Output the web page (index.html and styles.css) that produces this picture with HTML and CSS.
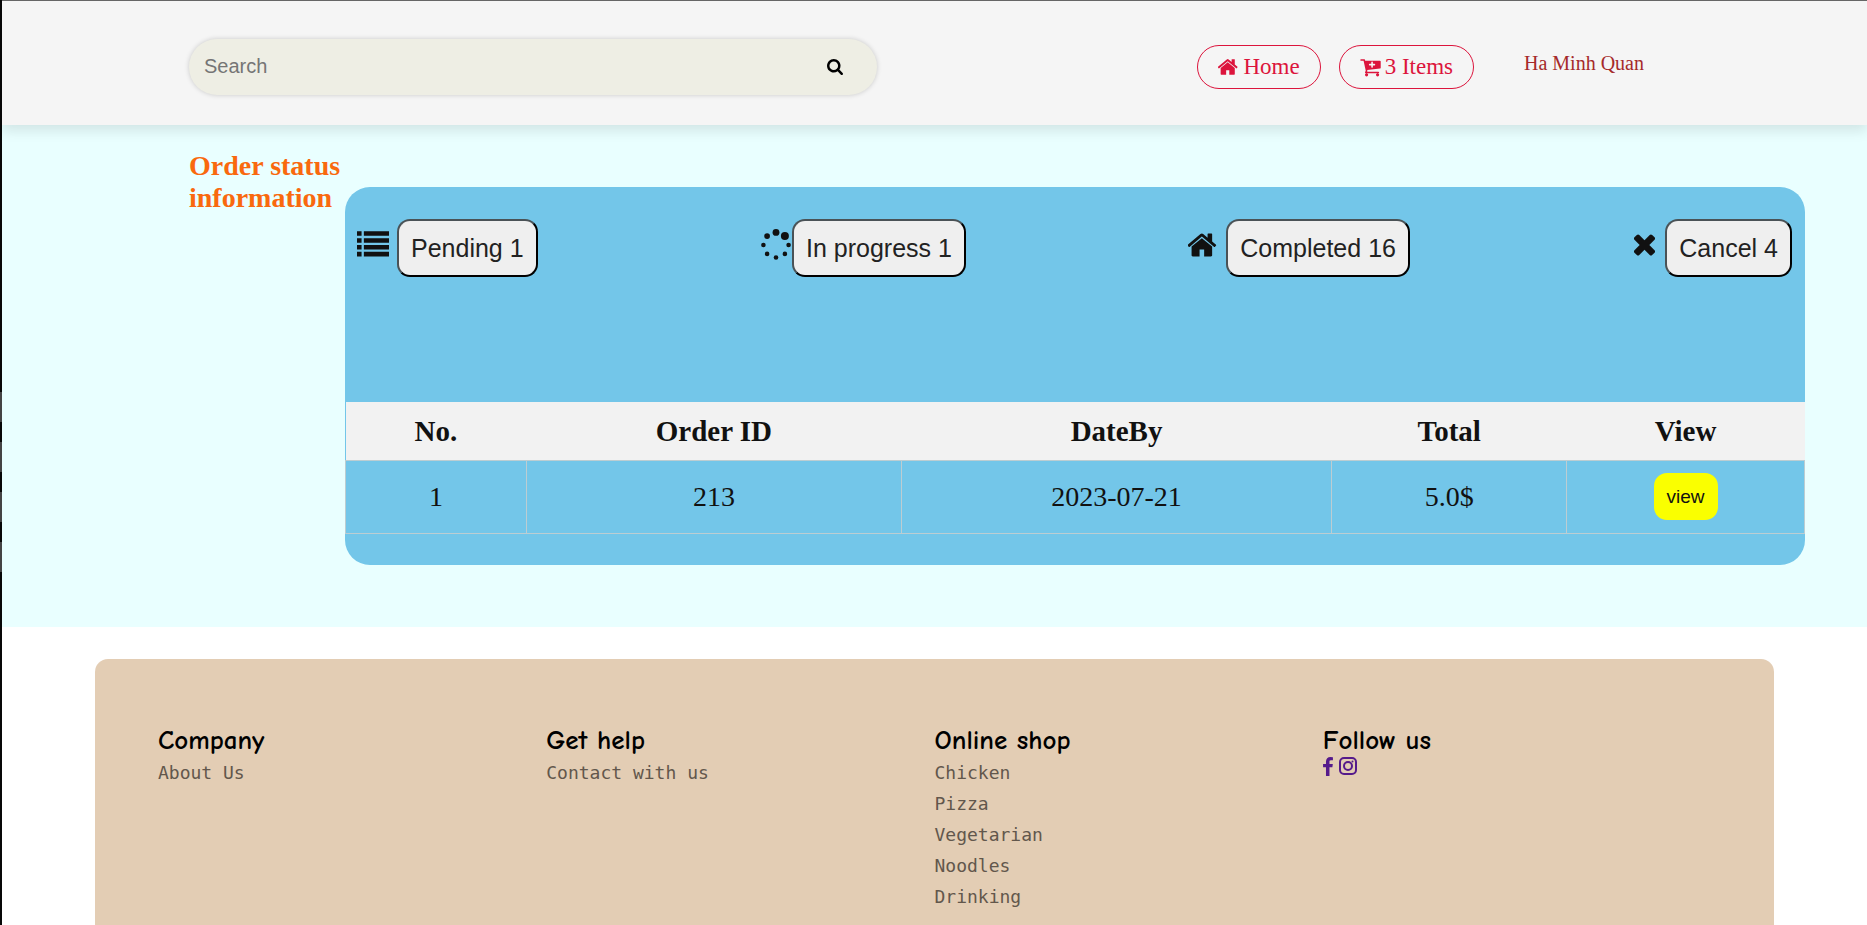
FILE: index.html
```html
<!DOCTYPE html>
<html lang="en">
<head>
<meta charset="utf-8">
<title>Order status</title>
<link rel="stylesheet" href="styles.css">
</head>
<body>
<svg class="sprite" aria-hidden="true">
  <symbol id="home" viewBox="64 0 1664 1792"><path d="M1472 992v480q0 26-19 45t-45 19h-384v-384h-256v384h-384q-26 0-45-19t-19-45v-480q0-1 .5-3t.5-3l575-474 575 474q1 2 1 6zm223-69l-62 74q-8 9-21 11h-3q-13 0-21-7l-692-577-692 577q-12 8-24 7-13-2-21-11l-62-74q-8-10-7-23.5t11-21.5l719-599q32-26 76-26t76 26l244 204v-195q0-14 9-23t23-9h192q14 0 23 9t9 23v408l219 182q10 8 11 21.5t-7 23.5z"/></symbol>
</svg>
<header class="header">
  <form class="search">
    <input class="search-input" type="text" placeholder="Search" aria-label="Search">
    <button class="search-button" type="button" aria-label="Submit search">
      <svg class="search-icon" viewBox="64 128 1664 1664"><path d="M1216 832q0-185-131.5-316.5t-316.5-131.5-316.5 131.5-131.5 316.5 131.5 316.5 316.5 131.5 316.5-131.5 131.5-316.5zm512 832q0 52-38 90t-90 38q-54 0-90-38l-343-342q-179 124-399 124-143 0-273.5-55.5t-225-150-150-225-55.5-273.5 55.5-273.5 150-225 225-150 273.5-55.5 273.5 55.5 225 150 150 225 55.5 273.5q0 220-124 399l343 343q37 37 37 90z"/></svg>
    </button>
  </form>
  <nav class="nav">
    <a class="pill" href="#"><svg class="pill-icon" viewBox="64 0 1664 1792"><use href="#home"/></svg>Home</a>
    <a class="pill" href="#"><svg class="pill-icon" viewBox="64 0 1664 1792"><path d="M1280 704q0-26-19-45t-45-19h-128v-128q0-26-19-45t-45-19-45 19-19 45v128h-128q-26 0-45 19t-19 45 19 45 45 19h128v128q0 26 19 45t45 19 45-19 19-45v-128h128q26 0 45-19t19-45zm-576 832q0 53-37.5 90.5t-90.5 37.5-90.5-37.5-37.5-90.5 37.5-90.5 90.5-37.5 90.5 37.5 37.5 90.5zm896 0q0 53-37.5 90.5t-90.5 37.5-90.5-37.5-37.5-90.5 37.5-90.5 90.5-37.5 90.5 37.5 37.5 90.5zm128-1088v512q0 24-16 42.5t-41 21.5l-1044 122q1 7 4.5 21.5t6 26.5 2.5 22q0 16-24 64h920q26 0 45 19t19 45-19 45-45 19h-1024q-26 0-45-19t-19-45q0-14 11-39.5t29.5-59.5 20.5-38l-177-823h-204q-26 0-45-19t-19-45 19-45 45-19h256q16 0 28.5 6.5t20 15.5 13 24.5 7.5 26.5 5.5 29.5 4.5 25.5h1201q26 0 45 19t19 45z"/></svg>3 Items</a>
    <a class="user" href="#">Ha Minh Quan</a>
  </nav>
</header>
<main class="orders">
  <h1 class="title">Order status information</h1>
  <section class="card">
    <div class="statuses">
      <div class="status">
        <svg class="icon" viewBox="0 0 1792 1792"><path d="M0 128h256v256H0zM384 128h1408v256H384zM0 512h256v256H0zM384 512h1408v256H384zM0 896h256v256H0zM384 896h1408v256H384zM0 1280h256v256H0zM384 1280h1408v256H384z"/></svg>
        <button class="status-button" type="button">Pending 1</button>
      </div>
      <div class="status status-tight">
        <svg class="icon" viewBox="0 0 1792 1792"><circle cx="896" cy="192" r="192"/><circle cx="1394" cy="398" r="224"/><circle cx="1600" cy="896" r="128"/><circle cx="1394" cy="1394" r="128"/><circle cx="896" cy="1600" r="128"/><circle cx="398" cy="1394" r="128"/><circle cx="192" cy="896" r="128"/><circle cx="398" cy="398" r="160"/></svg>
        <button class="status-button" type="button">In progress 1</button>
      </div>
      <div class="status">
        <svg class="icon icon-home" viewBox="64 0 1664 1792"><use href="#home"/></svg>
        <button class="status-button" type="button">Completed 16</button>
      </div>
      <div class="status">
        <svg class="icon icon-cancel" viewBox="192 64 1408 1792"><path d="M1490 1322q0 40-28 68l-136 136q-28 28-68 28t-68-28l-294-294-294 294q-28 28-68 28t-68-28l-136-136q-28-28-28-68t28-68l294-294-294-294q-28-28-28-68t28-68l136-136q28-28 68-28t68 28l294 294 294-294q28-28 68-28t68 28l136 136q28 28 28 68t-28 68l-294 294 294 294q28 28 28 68z"/></svg>
        <button class="status-button" type="button">Cancel 4</button>
      </div>
    </div>
    <table class="table">
      <colgroup><col class="col-no"><col class="col-id"><col class="col-date"><col class="col-total"><col></colgroup>
      <thead><tr><th>No.</th><th>Order ID</th><th>DateBy</th><th>Total</th><th>View</th></tr></thead>
      <tbody><tr><td>1</td><td>213</td><td>2023-07-21</td><td>5.0$</td><td><button class="view" type="button">view</button></td></tr></tbody>
    </table>
  </section>
</main>
<footer class="footer">
  <section><h2 class="footer-title">Company</h2><ul class="links"><li><a href="#">About Us</a></li></ul></section>
  <section><h2 class="footer-title">Get help</h2><ul class="links"><li><a href="#">Contact with us</a></li></ul></section>
  <section><h2 class="footer-title">Online shop</h2><ul class="links"><li><a href="#">Chicken</a></li><li><a href="#">Pizza</a></li><li><a href="#">Vegetarian</a></li><li><a href="#">Noodles</a></li><li><a href="#">Drinking</a></li></ul></section>
  <section><h2 class="footer-title">Follow us</h2>
    <div class="social">
      <a href="#" aria-label="Facebook"><svg class="facebook" viewBox="479 0 864 1664"><path d="M1343 12v264h-157q-86 0-116 36t-30 108v189h293l-39 296h-254v759h-306v-759h-255v-296h255v-218q0-186 104-288.5t277-102.5q147 0 228 12z"/></svg></a>
      <a href="#" aria-label="Instagram"><svg class="instagram" viewBox="0 0 18 18"><rect x="1" y="1" width="16" height="16" rx="4"/><circle cx="9" cy="9" r="4"/><circle class="dot" cx="13.5" cy="4.5" r="1"/></svg></a>
    </div>
  </section>
</footer>
</body>
</html>
```
FILE: styles.css
```css
* { box-sizing: border-box; }

html { background: #fff; }

body {
  margin: 0;
  padding-left: 2px;
  min-height: 100vh;
  overflow-x: hidden;
  font-family: "Liberation Serif", "Times New Roman", serif;
  color: #111;
  /* dark window edge with four lighter notches */
  background:
    linear-gradient(#444 0 30px, #080808 30px 50px, #444 50px 80px, #080808 80px 100px, #444 100px 130px, #080808 130px 150px, #444 150px 180px) 0 392px / 2px 180px no-repeat,
    linear-gradient(#080808, #080808) 0 0 / 2px 100% no-repeat;
}

.sprite { position: absolute; width: 0; height: 0; }

svg { display: block; fill: currentColor; }

.header {
  position: relative;
  display: flex;
  align-items: center;
  padding: 38px 223px 30px 187px;
  border-top: 1px solid #666;
  background: #f5f5f5;
  box-shadow: 0 6px 12px rgba(0, 0, 0, .1);
}

.search {
  display: flex;
  align-items: center;
  width: 47.3%;
  height: 56px;
  padding: 0 24px 0 15px;
  border-radius: 28px;
  background: #eeeee4;
  box-shadow: 0 0 5px rgba(0, 0, 0, .18);
}

.search-input {
  flex: 1;
  min-width: 0;
  padding: 0 0 2px;
  border: 0;
  outline: 0;
  background: none;
  font: 20px "Liberation Sans", Arial, sans-serif;
}

.search-input::placeholder { color: #757575; }

.search-button { padding: 10px; border: 0; background: none; color: #000; }

.search-icon { width: 16px; height: 16px; }

.nav {
  display: flex;
  align-items: flex-start;
  gap: 18px;
  margin-left: auto;
}

.pill {
  display: flex;
  align-items: center;
  gap: 4px;
  height: 44px;
  padding: 0 20px;
  border: 1px solid #dc143c;
  border-radius: 22px;
  color: #dc143c;
  font-size: 23px;
  text-decoration: none;
}

.pill-icon { width: 21px; height: 22px; }

.user {
  margin-left: 32px;
  padding-top: 7px;
  color: #a52a2a;
  font-size: 20px;
  text-decoration: none;
}

.orders {
  display: flex;
  align-items: flex-start;
  padding: 25px 62px 62px 187px;
  background: #e9ffff;
}

.title {
  flex: 0 0 156px;
  margin: 0;
  color: #f9690e;
  font-size: 28px;
  line-height: 32px;
}

.card {
  flex: 1;
  margin-top: 37px;
  padding: 32px 0 31px;
  border-radius: 25px;
  background: #73c6e9;
}

.statuses {
  display: flex;
  justify-content: space-between;
  padding: 0 13px 125px 12px;
}

.status { display: flex; align-items: flex-start; gap: 8px; }

.status-tight { gap: 0; }

.icon { width: 32px; height: 32px; margin-top: 10px; }

.icon-home { width: 30px; }

.icon-cancel { width: 25px; }

.status-button {
  height: 58px;
  padding: 0 12px;
  border: 2px solid;
  border-color: #4a5256 #000 #000 #4a5256;
  border-radius: 13px;
  background: #efefef;
  color: #222;
  font: 25px "Liberation Sans", Arial, sans-serif;
}

.table {
  width: 100%;
  border-collapse: collapse;
  table-layout: fixed;
  font-size: 28px;
  line-height: 32px;
  text-align: center;
}

.col-no { width: 12.4%; }
.col-id { width: 25.7%; }
.col-date { width: 29.5%; }
.col-total { width: 16.1%; }

.table th { padding: 13px; background: #f2f2f2; font-size: 29px; }

.table td { padding: 12px 12px 13px; border: 1px solid #bccdd2; }

.view {
  display: block;
  height: 47px;
  margin: 0 auto;
  padding: 0 13px;
  border: 0;
  border-radius: 13px;
  background: #faff00;
  color: #111;
  font: 19px "Liberation Sans", Arial, sans-serif;
}

.footer {
  display: grid;
  grid-template-columns: repeat(4, 1fr);
  margin: 32px 93px 0;
  padding: 66px 63px 16px;
  border-radius: 13px 13px 0 0;
  background: #e3cdb4;
}

.footer-title {
  margin: 0;
  color: #000;
  font: bold 27px/32px "Comic Sans MS", "Comic Neue", Lato, sans-serif;
}

.links {
  margin: 0;
  padding: 0;
  list-style: none;
  font: 18px/31px "DejaVu Sans Mono", monospace;
}

.links a { color: #62574c; text-decoration: none; }

.social { display: flex; gap: 6px; }

.social a { color: #551a8b; }

.facebook { width: 10px; height: 19px; }

.instagram { width: 18px; height: 18px; fill: none; stroke: currentColor; stroke-width: 2; }

.instagram .dot { fill: currentColor; stroke: none; }
```
